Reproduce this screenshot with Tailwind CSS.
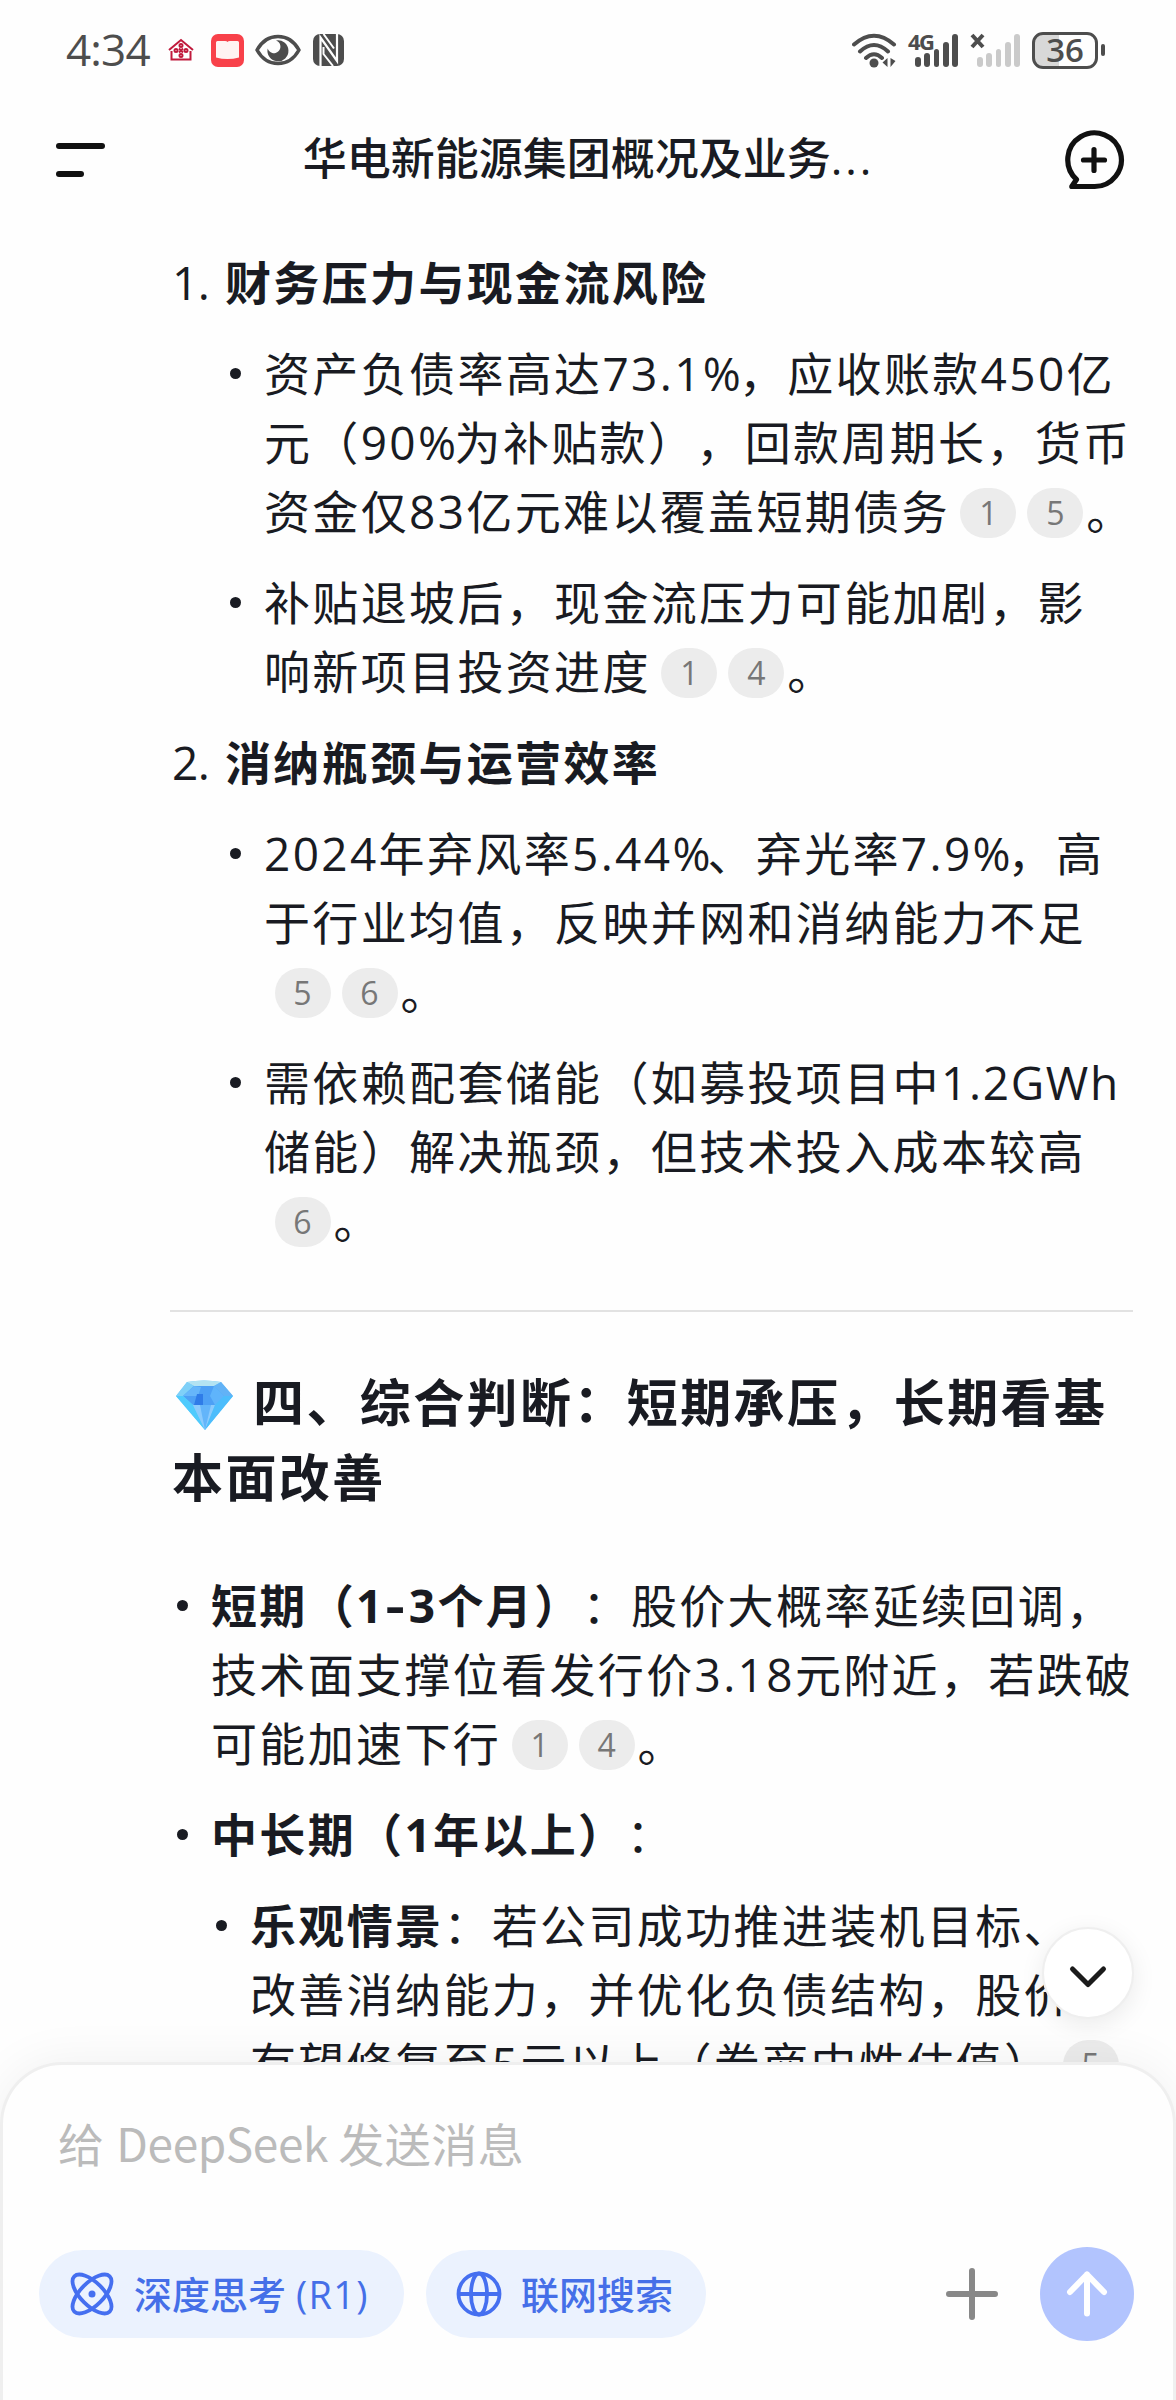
<!DOCTYPE html>
<html lang="zh-CN">
<head>
    <meta charset="UTF-8">
    <meta name="viewport" content="width=device-width, initial-scale=1.0">
    <title>华电新能源集团概况及业务</title>
    <script src="https://cdn.jsdelivr.net/npm/@tailwindcss/browser@4"></script>
    <style>
        body { font-family: "Open Sans", "Noto Sans CJK SC", sans-serif; text-spacing-trim: space-all; }
    </style>
</head>
<body class="bg-[#fefefe] text-[#191b22]">
    <div class="flex flex-col w-[1176px] h-[2400px] overflow-hidden">

        <!-- Status bar -->
        <div class="flex items-center justify-between h-[100px] shrink-0 pl-[66px] pr-[71px] text-[#4d4d4d]">
            <div class="flex items-center">
                <span class="w-[102px] text-[44px] leading-[100px] font-medium tracking-[-0.800px] -mt-[2px]">4:34</span>
                <svg class="w-[26px] h-[24px]" viewBox="0 0 26 24" fill="none" stroke="#c01a3c" stroke-width="2">
                    <path d="M1 12 13 2l12 10M3.500 13v8.500h19V13" />
                    <circle cx="13" cy="7.500" r="1.500" /><circle cx="8" cy="12.500" r="1.500" /><circle cx="18" cy="12.500" r="1.500" /><circle cx="13" cy="17.500" r="1.500" />
                    <path d="M11 10.500l4 4M15 10.500l-4 4" />
                </svg>
                <svg class="w-[33px] h-[33px] ml-[17px]" viewBox="0 0 33 33">
                    <rect width="33" height="33" rx="7" fill="#f8414a" />
                    <path d="M5 8.500q0-1.500 1.500-1.500h7.500q2 0 2.500 1 .5-1 2.500-1h7.500q1.500 0 1.500 1.500v15q-11.500 3-23 0z" fill="#fff3f2" />
                </svg>
                <svg class="w-[46px] h-[32px] ml-[11px]" viewBox="0 0 46 32">
                    <path d="M2 16C7 7 14 2.500 23 2.500S39 7 44 16C39 25 32 29.500 23 29.500S7 25 2 16z" fill="none" stroke="#4d4d4d" stroke-width="3.500" stroke-linejoin="round" />
                    <path d="M21 6.500A10.500 10.500 0 1 1 12.700 14.500 6.500 6.500 0 1 0 21 6.500z" fill="#4d4d4d" />
                </svg>
                <svg class="w-[31px] h-[32px] ml-[12px]" viewBox="0 0 31 32">
                    <rect width="31" height="32" rx="7" fill="#4d4d4d" />
                    <path d="M7.500 32V3.500L24 27V0" fill="none" stroke="#fefefe" stroke-width="2.200" />
                    <path d="M10.500 0 21 14.500M10.500 13v7L20 32" fill="none" stroke="#fefefe" stroke-width="2" />
                </svg>
            </div>
            <div class="flex items-center">
                <svg class="w-[45px] h-[36px]" viewBox="0 0 45 36" fill="none" stroke="#4d4d4d" stroke-width="4" stroke-linecap="round">
                    <path d="M2 12.500Q22 -5 42 12.500M8 19.500Q22 6.500 36 19.500M14 26Q22 18.500 30 26" />
                    <circle cx="22" cy="31" r="4.500" fill="#4d4d4d" stroke="none" />
                    <path d="M35.500 26v9l-5-4.500zM38.500 26v9l5-6z" fill="#4d4d4d" stroke="none" />
                </svg>
                <div class="relative ml-[18px] w-[43px] h-[34px] flex items-end gap-[3.500px]">
                    <span class="absolute left-[-7px] -top-[3px] text-[22px] leading-[22px] font-bold tracking-[-1.500px]">4G</span>
                    <i class="w-[5.800px] h-[10px] rounded-full bg-[#4d4d4d]"></i>
                    <i class="w-[5.800px] h-[14px] rounded-full bg-[#4d4d4d]"></i>
                    <i class="w-[5.800px] h-[18px] rounded-full bg-[#4d4d4d]"></i>
                    <i class="w-[5.800px] h-[25px] rounded-full bg-[#4d4d4d]"></i>
                    <i class="w-[5.800px] h-[33px] rounded-full bg-[#4d4d4d]"></i>
                </div>
                <div class="relative ml-[19px] w-[43px] h-[34px] flex items-end gap-[3.500px]">
                    <svg class="absolute left-[-7px] top-0 w-[15px] h-[16px]" viewBox="0 0 15 16" stroke="#4d4d4d" stroke-width="4"><path d="M2 2 13 14M13 2 2 14" /></svg>
                    <i class="w-[5.800px] h-[10px] rounded-full bg-[#cacaca]"></i>
                    <i class="w-[5.800px] h-[14px] rounded-full bg-[#cacaca]"></i>
                    <i class="w-[5.800px] h-[18px] rounded-full bg-[#cacaca]"></i>
                    <i class="w-[5.800px] h-[25px] rounded-full bg-[#cacaca]"></i>
                    <i class="w-[5.800px] h-[33px] rounded-full bg-[#cacaca]"></i>
                </div>
                <div class="ml-[12px] w-[66px] h-[37px] rounded-[11px] border-3 border-[#4d4d4d] bg-linear-to-r from-[#d8d8d8] from-40% to-[#fefefe] to-40% flex items-center justify-center">
                    <span class="text-[33px] leading-[31px] font-semibold -mt-px">36</span>
                </div>
                <i class="ml-[3px] w-[4px] h-[12px] rounded-full bg-[#4d4d4d]"></i>
            </div>
        </div>

        <!-- Title bar -->
        <div class="flex items-center justify-between h-[120px] shrink-0 pl-[56px] pr-[51px]">
            <div class="flex flex-col gap-[22px] w-[61px]">
                <i class="w-[49px] h-[6px] rounded-full bg-[#111]"></i>
                <i class="w-[28px] h-[6px] rounded-full bg-[#111]"></i>
            </div>
            <h1 class="-mt-[4px] -ml-[3px] text-[44px] leading-[60px] font-medium whitespace-nowrap">华电新能源集团概况及业务<span class="tracking-[3px]">...</span></h1>
            <svg class="w-[62px] h-[62px]" viewBox="0 0 62 62" fill="none" stroke="#111" stroke-width="5.200" stroke-linecap="round" stroke-linejoin="round">
                <path d="M31 57.500H8.800L13.500 50.500A26.800 26.800 0 1 1 31 57.500z" />
                <path d="M31 20.500v21M20.500 31h21" />
            </svg>
        </div>

        <!-- Answer body -->
        <main class="flex-1 min-h-0 overflow-hidden pt-[28px] text-[46px] leading-[69px] tracking-[2.350px] whitespace-nowrap">
            <div class="flex flex-col gap-[22px] pl-[172px]">
                <div class="flex"><span class="w-[53px] tracking-[-0.500px]">1.</span><b>财务压力与现金流风险</b></div>
                <div class="flex pl-[58px]">
                    <i class="w-[11px] h-[11px] mt-[29px] mr-[23px] rounded-full bg-[#191b22]"></i>
                    <p>资产负债率高达73.1<span class="tracking-[-2px]">%</span>，应收账款450亿<br>元（90<span class="tracking-[-1.500px]">%</span>为补贴款），回款周期长，货币<br>资金仅83亿元难以覆盖短期债务<sup class="inline-flex items-center justify-center w-[56px] h-[50px] ml-[10.500px] rounded-full bg-[#ececec] text-[32px] font-medium tracking-normal text-[#777] align-[4px] leading-none top-0">1</sup><sup class="inline-flex items-center justify-center w-[56px] h-[50px] ml-[11px] mr-[3px] rounded-full bg-[#ececec] text-[32px] font-medium tracking-normal text-[#777] align-[4px] leading-none top-0">5</sup>。</p>
                </div>
                <div class="flex pl-[58px]">
                    <i class="w-[11px] h-[11px] mt-[29px] mr-[23px] rounded-full bg-[#191b22]"></i>
                    <p>补贴退坡后，现金流压力可能加剧，影<br>响新项目投资进度<sup class="inline-flex items-center justify-center w-[56px] h-[50px] ml-[10.500px] rounded-full bg-[#ececec] text-[32px] font-medium tracking-normal text-[#777] align-[4px] leading-none top-0">1</sup><sup class="inline-flex items-center justify-center w-[56px] h-[50px] ml-[11px] mr-[3px] rounded-full bg-[#ececec] text-[32px] font-medium tracking-normal text-[#777] align-[4px] leading-none top-0">4</sup>。</p>
                </div>
                <div class="flex"><span class="w-[53px] tracking-[-0.500px]">2.</span><b>消纳瓶颈与运营效率</b></div>
                <div class="flex pl-[58px]">
                    <i class="w-[11px] h-[11px] mt-[29px] mr-[23px] rounded-full bg-[#191b22]"></i>
                    <p>2024年弃风率5.44<span class="tracking-[-3px]">%</span>、弃光率7.9<span class="tracking-[-3px]">%</span>，高<br>于行业均值，反映并网和消纳能力不足<br><sup class="inline-flex items-center justify-center w-[56px] h-[50px] ml-[10.500px] rounded-full bg-[#ececec] text-[32px] font-medium tracking-normal text-[#777] align-[4px] leading-none top-0">5</sup><sup class="inline-flex items-center justify-center w-[56px] h-[50px] ml-[11px] mr-[3px] rounded-full bg-[#ececec] text-[32px] font-medium tracking-normal text-[#777] align-[4px] leading-none top-0">6</sup>。</p>
                </div>
                <div class="flex pl-[58px]">
                    <i class="w-[11px] h-[11px] mt-[29px] mr-[23px] rounded-full bg-[#191b22]"></i>
                    <p>需依赖配套储能（如募投项目中<span class="tracking-[1.700px]">1.2GWh</span><br>储能）解决瓶颈，但技术投入成本较高<br><sup class="inline-flex items-center justify-center w-[56px] h-[50px] ml-[10.500px] mr-[3px] rounded-full bg-[#ececec] text-[32px] font-medium tracking-normal text-[#777] align-[4px] leading-none top-0">6</sup>。</p>
                </div>
            </div>

            <hr class="mt-[55px] ml-[170px] w-[963px] border-t-2 border-[#e2e2e2]">

            <h3 class="mt-[53px] pl-[172px] text-[51px] leading-[75px] font-bold tracking-[2.400px]"><svg class="inline-block w-[58px] h-[50px] ml-[3px] mr-[20px] align-[-8px]" viewBox="0 0 58 50">
                    <path d="M12 2Q29-1 46 2L58 16 30 50 1 16z" fill="#6ccbfb" />
                    <path d="M12 2Q29-1 46 2l-7 4H19z" fill="#b3e3f2" />
                    <path d="M12 2l7 4L8 16H1z" fill="#7fd0f8" />
                    <path d="M46 2l-7 4 10 10h9z" fill="#62b2f6" />
                    <path d="M19 6h20l10 10-9 9H18L8 16z" fill="#4da0f5" />
                    <path d="M19 6l7 1-3 9-15 0z" fill="#66b6fa" />
                    <path d="M22 14h6v11H19z" fill="#2f7ce8" />
                    <path d="M39 6l10 10-9 9-5-9z" fill="#5fb4fb" />
                    <path d="M1 16h7l10 9 12 25z" fill="#4fcbfd" />
                    <path d="M18 25h22L30 50z" fill="#8ccbfd" />
                    <path d="M25 25h11l-6 25z" fill="#63b5fa" />
                    <path d="M58 16h-9l-9 9-10 25z" fill="#4dbdfc" />
                </svg>四、综合判断：短期承压，长期看基<br>本面改善</h3>

            <div class="flex flex-col gap-[22px] mt-[56px] pl-[177px]">
                <div class="flex">
                    <i class="w-[11px] h-[11px] mt-[29px] mr-[23px] rounded-full bg-[#191b22]"></i>
                    <p><b>短期（1<span class="inline-block mx-[3.500px] scale-x-130">-</span>3个月）</b>：股价大概率延续回调，<br>技术面支撑位看发行价3.18元附近，若跌破<br>可能加速下行<sup class="inline-flex items-center justify-center w-[56px] h-[50px] ml-[10.500px] rounded-full bg-[#ececec] text-[32px] font-medium tracking-normal text-[#777] align-[4px] leading-none top-0">1</sup><sup class="inline-flex items-center justify-center w-[56px] h-[50px] ml-[11px] mr-[3px] rounded-full bg-[#ececec] text-[32px] font-medium tracking-normal text-[#777] align-[4px] leading-none top-0">4</sup>。</p>
                </div>
                <div class="flex">
                    <i class="w-[11px] h-[11px] mt-[29px] mr-[23px] rounded-full bg-[#191b22]"></i>
                    <p><b>中长期（1年以上）</b>：</p>
                </div>
                <div class="flex pl-[39px]">
                    <i class="w-[11px] h-[11px] mt-[29px] mr-[23px] rounded-full bg-[#191b22]"></i>
                    <p><b>乐观情景</b>：若公司成功推进装机目标、<br>改善消纳能力，并优化负债结构，股价<br>有望修复至5元以上（券商中性估值）<sup class="inline-flex items-center justify-center w-[56px] h-[50px] ml-[10.500px] rounded-full bg-[#ececec] text-[32px] font-medium tracking-normal text-[#777] align-[4px] leading-none top-0">5</sup></p>
                </div>
            </div>
        </main>

        <!-- Composer -->
        <footer class="relative h-[338px] shrink-0 rounded-t-[62px] border-3 border-b-0 border-[#efefef] bg-[#fefefe] shadow-[0_0_50px_rgba(0,0,0,0.06)]">
            <button class="absolute left-[1039px] -top-[138px] w-[92px] h-[92px] rounded-full border-2 border-[#efefef] bg-white shadow-[0_6px_24px_rgba(0,0,0,0.08)] flex items-center justify-center">
                <svg class="w-[40px] h-[26px] mt-[8px]" viewBox="0 0 40 26" fill="none" stroke="#1b1b1b" stroke-width="5" stroke-linecap="round" stroke-linejoin="round"><path d="M4.500 5 20 20.500 35.500 5" /></svg>
            </button>
            <div class="pt-[43px] pl-[55px] h-[182px] text-[46px] leading-[69px] text-[#bbb] font-['Noto_Sans_CJK_SC',sans-serif]">给 <span class="ml-[2px] tracking-[-0.400px]">DeepSeek</span> <span class="tracking-[0.500px]">发送消息</span></div>
            <div class="flex items-center pl-[36px] text-[38px] font-medium text-[#456fe8] whitespace-nowrap">
                <button class="flex items-center w-[365px] h-[88px] pl-[31px] rounded-full bg-[#ebf2fe]">
                    <svg class="w-[44px] h-[44px]" viewBox="0 0 44 44" fill="none" stroke="#456ff0" stroke-width="3.800">
                        <ellipse cx="22" cy="22" rx="25" ry="11.500" transform="rotate(45 22 22)" />
                        <ellipse cx="22" cy="22" rx="25" ry="11.500" transform="rotate(-45 22 22)" />
                        <circle cx="22" cy="22" r="3.500" fill="#456ff0" stroke="none" />
                    </svg>
                    <span class="ml-[20px]">深度思考 <span class="tracking-[1.300px]">(R1)</span></span>
                </button>
                <button class="flex items-center w-[280px] h-[88px] ml-[22px] pl-[30px] rounded-full bg-[#ebf2fe]">
                    <svg class="w-[46px] h-[46px]" viewBox="0 0 46 46" fill="none" stroke="#456ff0" stroke-width="3.800">
                        <circle cx="23" cy="23" r="20.500" />
                        <ellipse cx="23" cy="23" rx="8" ry="20.500" />
                        <path d="M3 23h40" />
                    </svg>
                    <span class="ml-[19px]">联网搜索</span>
                </button>
                <svg class="w-[52px] h-[52px] ml-[240px]" viewBox="0 0 52 52" stroke="#888" stroke-width="6" stroke-linecap="round"><path d="M26 3v46M3 26h46" /></svg>
                <button class="ml-[42px] w-[94px] h-[94px] rounded-full bg-[#b2c4fe] flex items-center justify-center">
                    <svg class="w-[44px] h-[48px]" viewBox="0 0 44 48" fill="none" stroke="#fff" stroke-width="6" stroke-linecap="round" stroke-linejoin="round"><path d="M22 43.500V4.500M5 22 22 4.500 39 22" /></svg>
                </button>
            </div>
        </footer>
    </div>
</body>
</html>
